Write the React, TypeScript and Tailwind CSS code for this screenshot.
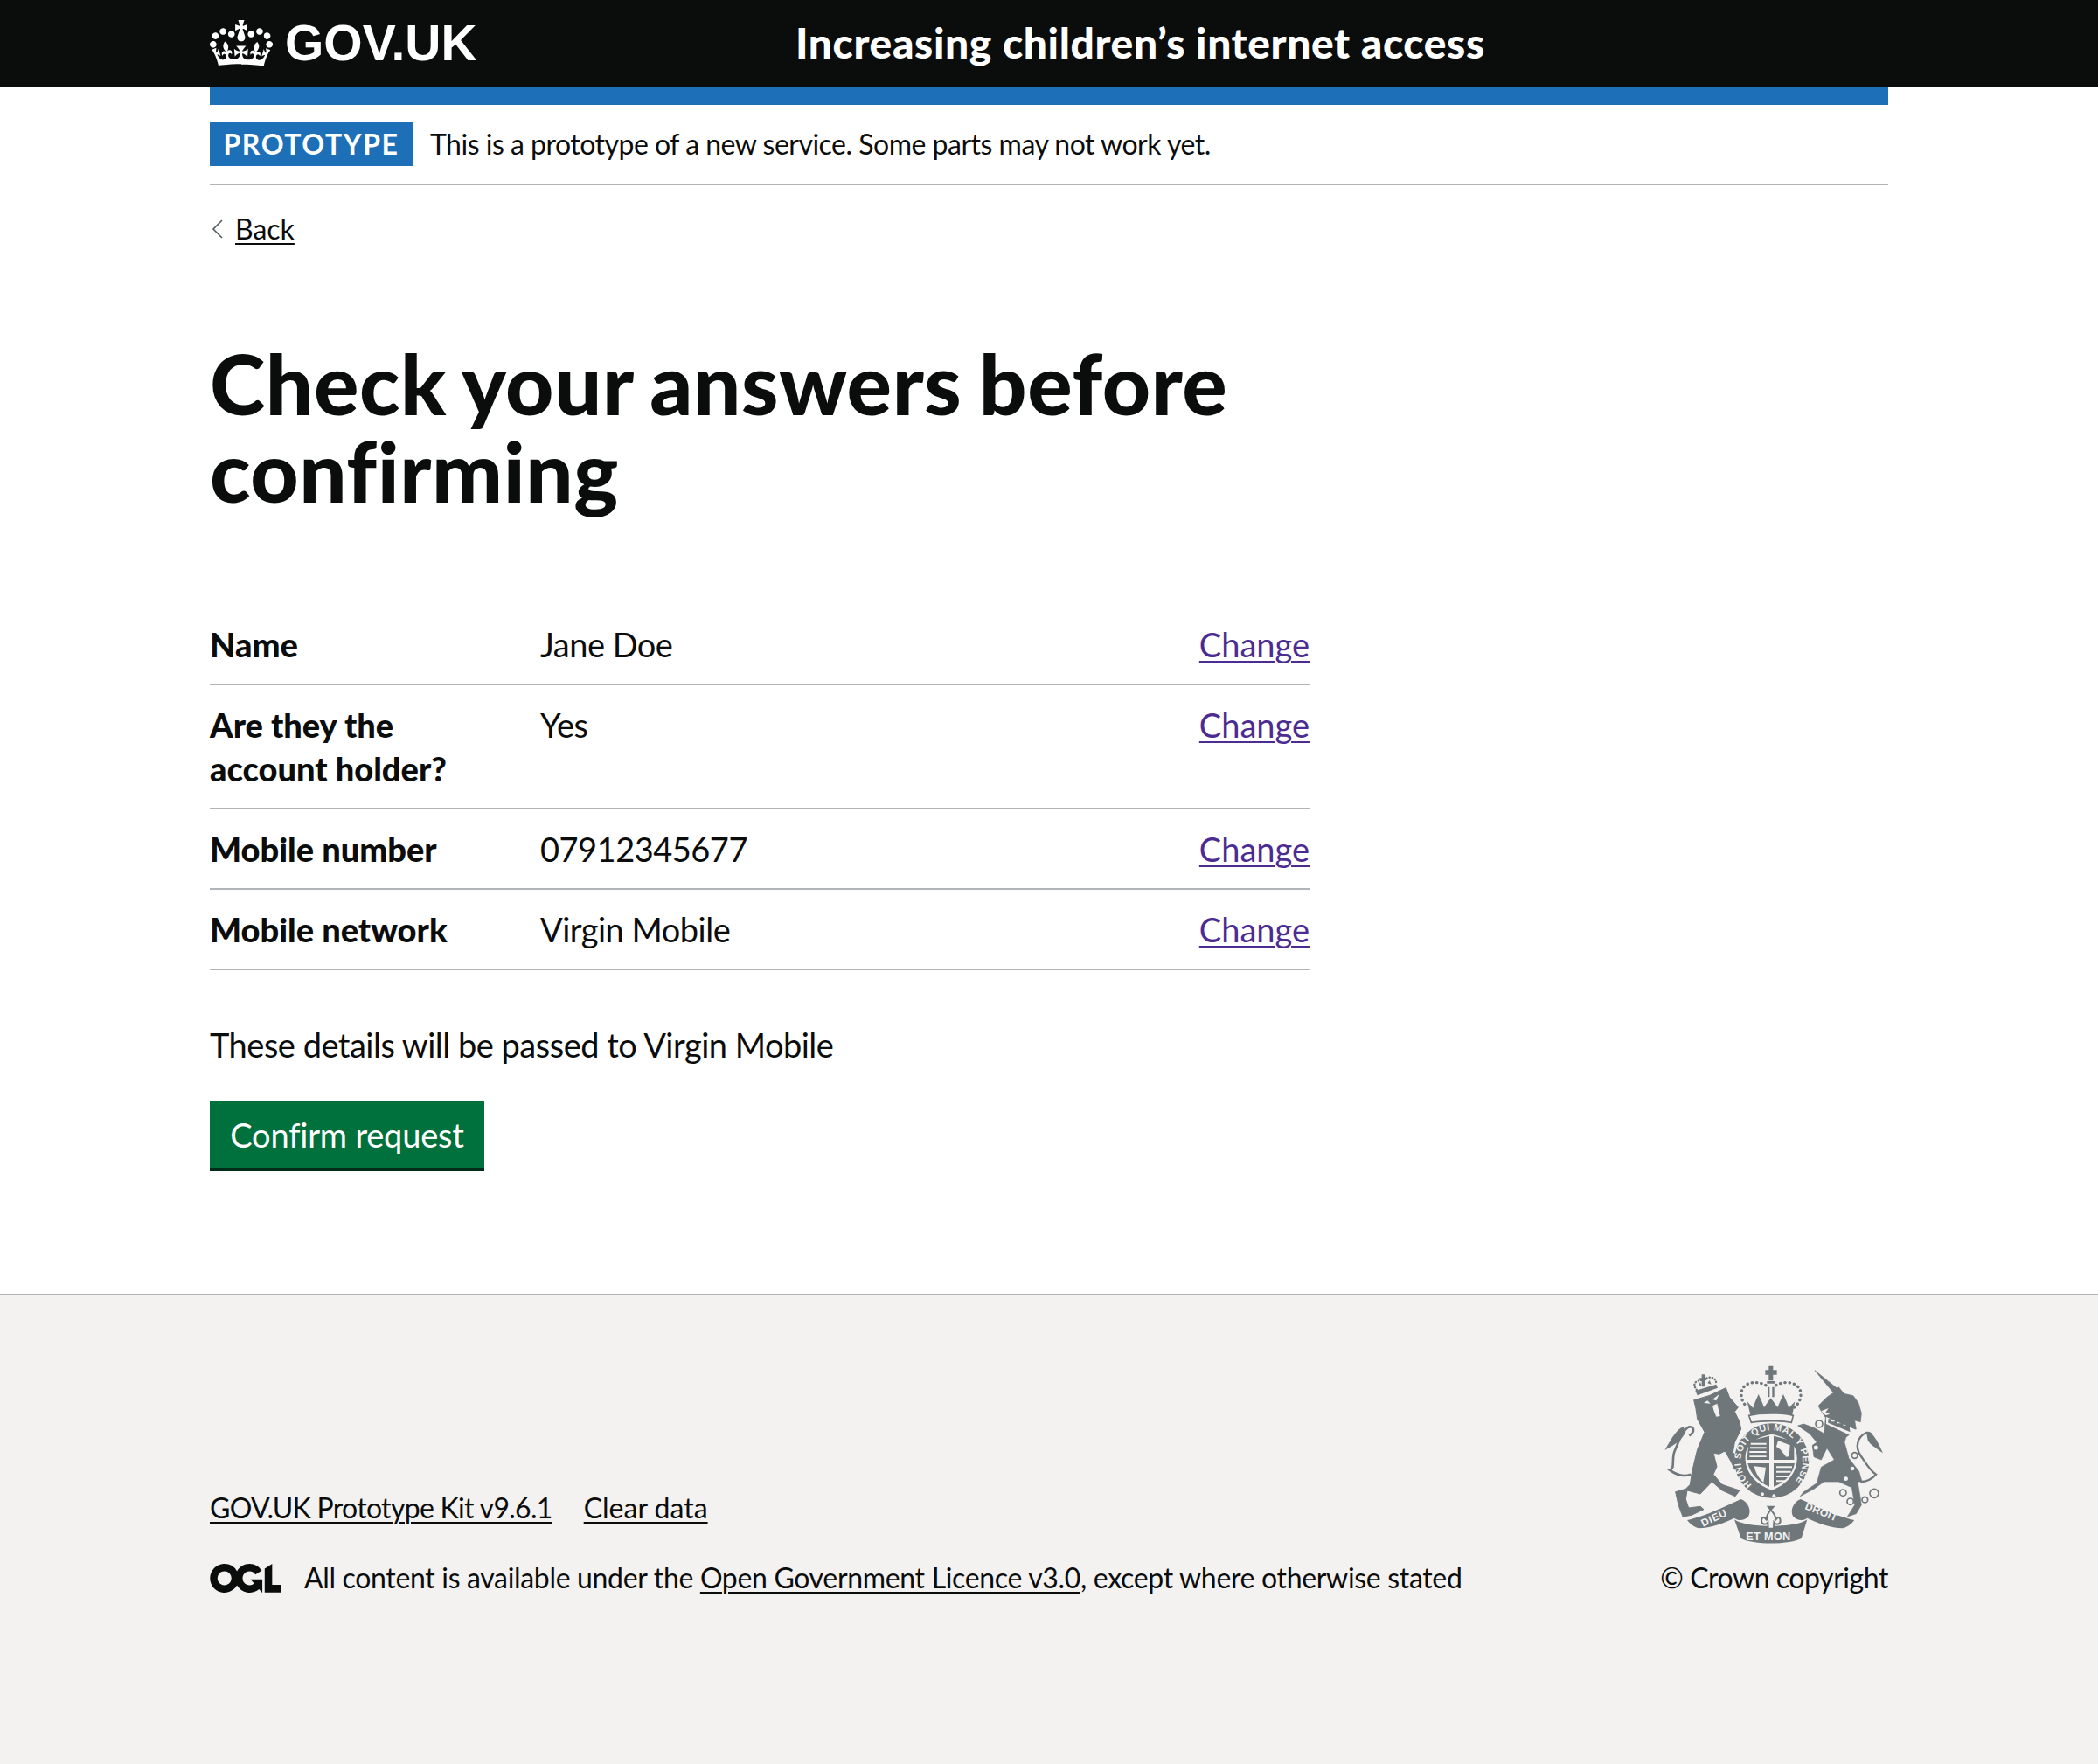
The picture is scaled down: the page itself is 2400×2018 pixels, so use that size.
const rows = [
  { key: ["Name"], value: "Jane Doe" },
  { key: ["Are they the", "account holder?"], value: "Yes" },
  { key: ["Mobile number"], value: "07912345677" },
  { key: ["Mobile network"], value: "Virgin Mobile" },
];

function Crown() {
  return (
    <svg viewBox="0 0 132 97" className="h-[53px] w-[72px] fill-white">
      <path
        fillRule="evenodd"
        d="M25 30.2c3.5 1.5 7.7-.2 9.1-3.7 1.5-3.6-.2-7.8-3.9-9.2-3.6-1.4-7.6.3-9.1 3.9-1.4 3.5.3 7.5 3.9 9zM9 39.5c3.6 1.5 7.8-.2 9.2-3.7 1.5-3.6-.2-7.8-3.9-9.1-3.6-1.5-7.6.2-9.1 3.8-1.4 3.5.3 7.5 3.8 9zM4.4 57.2c3.5 1.5 7.7-.2 9.1-3.8 1.5-3.6-.2-7.7-3.9-9.1-3.5-1.5-7.6.3-9.1 3.8-1.4 3.5.3 7.6 3.9 9.1zm38.3-21.4c3.5 1.5 7.7-.2 9.1-3.8 1.5-3.6-.2-7.7-3.9-9.1-3.6-1.5-7.6.3-9.1 3.8-1.3 3.6.4 7.7 3.9 9.1zm64.4-5.6c-3.6 1.5-7.8-.2-9.1-3.7-1.5-3.6.2-7.8 3.8-9.2 3.6-1.4 7.7.3 9.2 3.9 1.3 3.5-.4 7.5-3.9 9zm15.9 9.3c-3.6 1.5-7.7-.2-9.1-3.7-1.5-3.6.2-7.8 3.7-9.1 3.6-1.5 7.7.2 9.2 3.8 1.5 3.5-.3 7.5-3.8 9zm4.7 17.7c-3.6 1.5-7.8-.2-9.2-3.8-1.5-3.6.2-7.7 3.9-9.1 3.6-1.5 7.7.3 9.2 3.8 1.3 3.5-.4 7.6-3.9 9.1zM89.3 35.8c-3.6 1.5-7.8-.2-9.2-3.8-1.4-3.6.2-7.7 3.9-9.1 3.6-1.5 7.7.3 9.2 3.8 1.4 3.6-.3 7.7-3.9 9.1zM69.7 17.7l8.9 4.7V9.3l-8.9 2.8c-.2-.3-.5-.6-.9-.9L72.4 0H59.6l3.5 11.2c-.3.3-.6.5-.9.9l-8.8-2.8v13.1l8.8-4.7c.3.3.6.7.9.9l-5 15.4v.1c-.2.8-.4 1.6-.4 2.4 0 4.1 3.1 7.5 7 8.1h.2c.3 0 .7.1 1 .1.4 0 .7 0 1-.1h.2c4-.6 7.1-4.1 7.1-8.1 0-.8-.1-1.7-.4-2.4V34l-5.1-15.4c.4-.2.7-.6 1-.9zM66 92.8c16.9 0 32.8 1.1 47.1 3.2 4-16.9 8.9-26.7 14-33.5l-9.6-3.4c1 4.9 1.1 7.2 0 10.2-1.5-1.4-3-4.3-4.2-8.7L108.6 76c2.8-2 5-3.2 7.5-3.3-4.4 9.4-10 11.9-13.6 11.2-4.3-.8-6.3-4.6-5.6-7.9 1-4.7 5.7-5.9 8-.5 4.3-8.7-3-11.4-7.6-8.8 7.1-7.2 7.9-13.5 2.1-21.1-8 6.1-8.1 12.3-4.5 20.8-4.7-5.4-12.1-2.5-9.5 6.2 3.4-5.2 7.9-2 7.2 3.1-.6 4.3-6.4 7.8-13.5 7.2-10.3-.9-10.9-8-11.2-13 2.5-.5 7.1 1.8 11 7.3L80.2 60c-4.1 4.4-8 5.3-12.3 5.4 1.4-4.4 8-11.6 8-11.6H55.5s6.4 7.2 7.9 11.6c-4.2-.1-8-1-12.3-5.4l1.4 16.4c3.9-5.5 8.5-7.7 10.9-7.3-.3 5-.9 12.1-11.1 13-7.2.6-12.9-2.9-13.5-7.2-.7-5 3.8-8.3 7.1-3.1 2.7-8.7-4.6-11.6-9.4-6.2 3.7-8.5 3.6-14.7-4.6-20.8-5.8 7.6-5 13.9 2.2 21.1-4.7-2.6-11.9.1-7.7 8.8 2.3-5.5 7.1-4.2 8.1.5.7 3.3-1.3 7.1-5.7 7.9-3.5.7-9-1.8-13.5-11.2 2.5.1 4.7 1.3 7.5 3.3l-4.7-15.4c-1.2 4.4-2.7 7.2-4.3 8.7-1.1-3-.9-5.3 0-10.2l-9.5 3.4c5 6.9 9.9 16.7 14 33.5 14.8-2.1 30.8-3.2 47.7-3.2z"
      />
    </svg>
  );
}

function Ogl() {
  return (
    <svg viewBox="0 0 483.2 195.7" className="h-[33px] w-[82px] shrink-0 fill-[#0b0c0c]">
      <path d="M421.5 142.8V.1l-50.7 32.3v161.1h112.4v-50.7zm-122.3-9.6A47.12 47.12 0 0 1 221 97.8c0-26 21.1-47.1 47.1-47.1 16.7 0 31.4 8.7 39.7 21.8l42.7-27.2A97.63 97.63 0 0 0 268.1 0c-36.5 0-68.3 20.1-85.1 49.7A98 98 0 0 0 97.8 0C43.9 0 0 43.9 0 97.8s43.9 97.8 97.8 97.8c36.5 0 68.3-20.1 85.1-49.7a97.76 97.76 0 0 0 149.6 25.4l19.4 22.2h3v-87.8h-80l24.3 27.5zM97.8 145c-26 0-47.1-21.1-47.1-47.1s21.1-47.1 47.1-47.1 47.2 21 47.2 47S123.8 145 97.8 145" />
    </svg>
  );
}

// coat of arms, 3x scale so the numbers are easier to read off
function Crest() {
  const grey = "#6f777b";
  const bg = "#f3f2f1";
  return (
    <svg viewBox="60 60 780 630" className="h-[210px] w-[260px]">
      {/* lion */}
      <g transform="translate(45 45)">
        <path
          fill={grey}
          stroke={grey}
          strokeWidth="3"
          strokeLinejoin="round"
          d="M128 140 L180 125 L238 98 L250 130 L280 165 L268 180 L285 215 L290 240 L268 285 L262 320 L290 345 L295 372 L268 378 L255 350 L235 315 L215 325 L195 322 L207 368 L195 395 L225 430 L285 450 L270 470 L225 450 L190 420 L150 462 L105 450 L100 480 L110 510 L150 505 L162 515 L120 535 L90 540 L75 500 L65 455 L100 445 L115 430 L122 385 L140 310 L165 250 L140 205 L135 170 Z"
        />
        <path fill="none" stroke={grey} strokeWidth="8" d="M118 395 C90 405 65 395 45 380 C65 375 50 345 62 315 C75 285 90 240 112 232 C130 230 132 250 112 262" />
        <path fill={grey} d="M92 232 C70 240 55 265 28 312 C60 295 85 280 100 250 Z" />
        <path fill={bg} d="M162 150 L185 152 L175 142 Z M192 138 L215 120 L205 142 Z M192 160 L208 152 L218 195 L205 197 L197 178 Z" />
        <path fill={grey} d="M133 108 L205 86 L210 98 L140 124 Z" />
        <path fill="none" stroke={grey} strokeWidth="7" strokeDasharray="1 9" strokeLinecap="round" d="M138 105 C120 85 135 70 160 72 C180 55 205 60 205 85" />
        <path fill={grey} d="M155 52 H165 V64 H172 V72 H165 V94 H155 V72 H148 V64 H155 Z M145 88 L150 78 L155 92 Z M175 82 L182 72 L188 86 Z" />
      </g>
      {/* unicorn */}
      <g transform="translate(420 45)">
        <path
          fill={grey}
          stroke={grey}
          strokeWidth="2"
          strokeLinejoin="round"
          d="M168 38 L245 100 L250 95 L268 118 L300 125 L318 150 L328 185 L325 215 L305 210 L310 240 L275 268 L270 285 L285 340 L320 385 L330 420 L315 420 L322 460 L328 500 L310 530 L280 540 L305 500 L295 440 L250 420 L200 420 L165 445 L118 470 L130 455 L175 425 L190 370 L235 345 L210 305 L190 345 L165 335 L160 295 L175 285 L150 255 L110 228 L130 222 L165 235 L200 255 L205 200 L190 178 L180 160 L210 130 L232 115 Z"
        />
        <path fill={bg} d="M207 198 L310 242 L296 264 L207 222 Z" />
        <path fill={grey} d="M214 212 V205 H222 V214 H236 V209 H244 V220 H258 V215 H266 V228 H280 V224 H288 V240 L290 250 L214 218 Z" />
        <path fill={bg} d="M190 178 L215 168 L205 182 L220 188 L205 192 Z" />
        <path fill="none" stroke={grey} strokeWidth="7" d="M325 420 C345 420 365 410 378 395 C360 385 345 360 325 330 C305 300 315 265 345 252 C365 250 370 268 355 275" />
        <path fill={grey} d="M345 250 C370 250 385 285 402 322 C380 305 360 295 350 278 Z" />
        <circle cx="297" cy="375" r="7" fill={bg} />
        <circle cx="275" cy="410" r="7" fill={bg} />
        <g fill={bg} stroke={grey} strokeWidth="5">
          <circle cx="305" cy="330" r="10" />
          <circle cx="183" cy="222" r="12" />
          <circle cx="172" cy="303" r="10" />
          <circle cx="265" cy="458" r="11" />
          <circle cx="290" cy="488" r="11" />
          <circle cx="340" cy="482" r="10" />
          <circle cx="372" cy="460" r="15" />
        </g>
      </g>
      {/* royal crown */}
      <path fill={grey} d="M430 68 H445 V82 H458 V98 H445 V118 H430 V98 H418 V82 H430 Z" />
      <path fill={grey} d="M424 120 H452 V128 H424 Z M426 140 H433 V175 H426 Z M442 140 H449 V175 H442 Z" />
      <path fill="none" stroke={grey} strokeWidth="10" strokeDasharray="1 15" strokeLinecap="round" d="M420 134 C385 115 335 125 336 165 C336 185 345 200 358 210 M455 134 C490 115 540 125 540 165 C540 185 530 200 518 210" />
      <path fill={grey} d="M356 190 L376 212 L384 190 L395 165 L406 190 L414 210 L424 196 L437 178 L450 196 L460 210 L469 190 L480 165 L491 190 L499 212 L520 190 L510 240 H368 Z" />
      <path fill={bg} stroke={grey} strokeWidth="5" d="M362 238 C400 228 480 228 514 238 L508 262 C470 255 405 255 370 262 Z" />
      {/* shield and garter */}
      <circle cx="440" cy="393" r="128" fill={grey} />
      <defs>
        <path id="garter" d="M372 476 A106 106 0 1 1 508 476" />
      </defs>
      <text fill={bg} fontFamily="'Liberation Sans', sans-serif" fontWeight="700" fontSize="32">
        <textPath href="#garter" textLength="500" lengthAdjust="spacing">HONI SOIT QUI MAL Y PENSE</textPath>
      </text>
      <path fill={bg} d="M350 390 C348 348 368 316 440 302 C512 316 529 348 527 390 C525 438 488 478 440 494 C392 478 352 438 350 390 Z" />
      <path fill={grey} d="M361 326 L432 308 V390 H356 Z M447 308 L517 326 V390 H447 Z M358 402 H432 V482 C397 468 367 440 358 402 Z M447 402 H519 C513 438 483 470 447 482 Z" />
      <g fill={bg}>
        <path d="M368 332 H422 V338 H368 Z M366 346 H422 V352 H366 Z M364 360 H422 V366 H364 Z M364 376 H422 V381 H364 Z" />
        <path d="M462 324 L503 340 L500 378 L490 380 L470 355 L456 345 Z" />
        <path d="M380 412 L420 416 L412 468 C395 453 385 435 380 412 Z" />
        <path d="M456 412 H510 V418 H456 Z M456 428 H506 V434 H456 Z M456 444 H498 V450 H456 Z M456 460 H486 V466 H456 Z" />
        <circle cx="408" cy="508" r="6" />
        <circle cx="448" cy="514" r="6" />
      </g>
      {/* motto */}
      <path fill={grey} d="M150 597 C210 585 290 545 335 525 C360 535 372 565 360 585 C345 600 325 600 312 590 C280 605 230 625 190 625 C175 622 160 610 150 597 Z" />
      <path fill={grey} d="M724 597 C664 585 584 545 539 525 C514 535 502 565 514 585 C529 600 549 600 562 590 C594 605 644 625 684 625 C699 622 714 610 724 597 Z" />
      <path fill={grey} d="M312 595 C350 625 525 625 562 595 L542 660 C500 682 375 682 335 660 Z" />
      <g fill={bg} fontFamily="'Liberation Sans', sans-serif" fontWeight="700" fontSize="36">
        <text x="205" y="620" letterSpacing="2" transform="rotate(-25 205 620)">DIEU</text>
        <text x="352" y="667" letterSpacing="1" fontSize="38">ET MON</text>
        <text x="552" y="558" letterSpacing="1" transform="rotate(22 552 558)">DROIT</text>
      </g>
      {/* fleur de lys */}
      <path fill={grey} d="M422 548 H452 L437 566 Z" />
      <path fill={bg} stroke={grey} strokeWidth="6" d="M437 562 C450 575 456 585 452 598 C465 580 470 590 470 600 C470 612 455 615 448 605 L447 626 L428 626 L427 605 C420 615 405 612 405 600 C405 590 412 580 424 598 C420 585 425 575 437 562 Z" />
    </svg>
  );
}

export default function App() {
  return (
    <div className="min-h-[2018px] flex flex-col bg-white font-['Lato','Noto_Sans',sans-serif] text-[#0b0c0c] [font-variant-ligatures:none]">
      <header className="bg-[#0b0c0c]">
        <div className="mx-auto flex h-[100px] w-[1920px] items-center pb-[2px]">
          <div className="flex w-[670px] items-center gap-[14px]">
            <Crown />
            <span className="font-['Liberation_Sans',Arial,sans-serif] text-[57px] leading-none font-bold text-white">GOV.UK</span>
          </div>
          <div className="text-[48px] leading-none font-black tracking-[0.6px] text-white">Increasing children’s internet access</div>
        </div>
      </header>

      <main className="mx-auto w-[1920px] flex-1">
        <div className="h-5 bg-[#1d70b8]" />
        <div className="flex items-center gap-5 border-b-2 border-[#b1b4b6] pt-5 pb-5">
          <strong className="flex h-[50px] w-[232px] items-center justify-center bg-[#1d70b8] text-[32px] font-bold tracking-[1.6px] text-white">PROTOTYPE</strong>
          <span className="text-[32px] leading-[50px] tracking-[-0.5px]">This is a prototype of a new service. Some parts may not work yet.</span>
        </div>

        <div className="mt-[30px] flex h-[40px] items-center gap-[12px] text-[32px]">
          <svg viewBox="0 0 17 24" className="h-[24px] w-[17px] fill-none stroke-[#505a5f] stroke-[1.6]">
            <path d="M14 2 L4 12 L14 22" />
          </svg>
          <a href="#" className="underline decoration-2 underline-offset-4">Back</a>
        </div>

        <h1 className="mt-[106px] w-[1258px] text-[96px] leading-[100px] font-black tracking-[0.6px] [word-spacing:-4px]">Check your answers before confirming</h1>

        <dl className="mt-[104px] w-[1258px]">
          {rows.map((row) => (
            <div key={row.value} className="flex border-b-2 border-[#b1b4b6] py-5 text-[38px] leading-[50px]">
              <dt className="w-[378px] font-black">
                {row.key.map((line) => (
                  <div key={line}>{line}</div>
                ))}
              </dt>
              <dd className="flex-1 tracking-[-0.5px]">{row.value}</dd>
              <dd>
                <a href="#" className="text-[#4c2c92] underline decoration-2 underline-offset-4">Change</a>
              </dd>
            </div>
          ))}
        </dl>

        <p className="mt-[60px] text-[38px] leading-[50px] tracking-[-0.5px]">These details will be passed to Virgin Mobile</p>

        <button className="mt-[40px] flex h-[80px] w-[314px] items-center justify-center border-b-4 border-[#002d18] bg-[#00703c] text-[38px] tracking-[-0.2px] text-white">
          Confirm request
        </button>
      </main>

      <footer className="mt-[128px] h-[538px] border-t-2 border-[#b1b4b6] bg-[#f3f2f1]">
        <div className="mx-auto flex w-[1920px] items-end justify-between pt-[78px] text-[32px]">
          <div>
            <div className="flex gap-[36px] leading-[40px]">
              <a href="#" className="tracking-[-0.7px] underline decoration-2 underline-offset-4">GOV.UK Prototype Kit v9.6.1</a>
              <a href="#" className="underline decoration-2 underline-offset-4">Clear data</a>
            </div>
            <div className="mt-[40px] flex items-center gap-[26px] leading-[40px] tracking-[-0.33px]">
              <Ogl />
              <span>
                All content is available under the{" "}
                <a href="#" className="underline decoration-2 underline-offset-4">Open Government Licence v3.0</a>, except where otherwise stated
              </span>
            </div>
          </div>
          <div className="flex flex-col items-end">
            <Crest />
            <a href="#" className="mt-[15px] leading-[40px] tracking-[-0.45px]">© Crown copyright</a>
          </div>
        </div>
      </footer>
    </div>
  );
}
